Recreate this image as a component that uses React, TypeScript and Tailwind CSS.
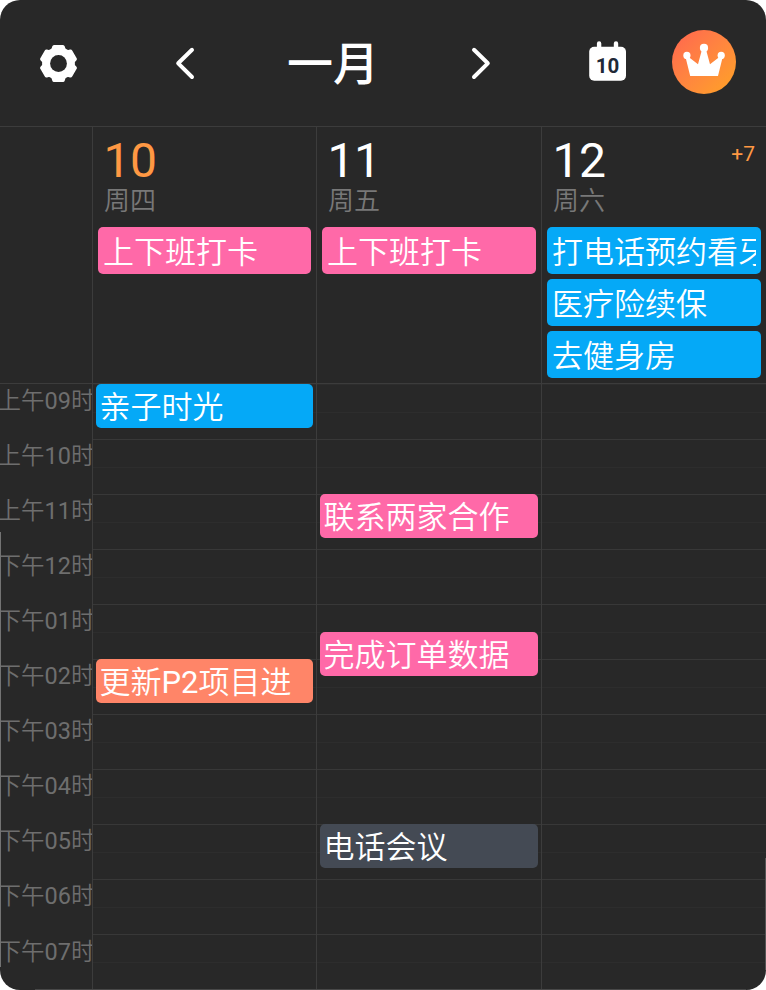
import React from "react";

type Tone = "pink" | "blue" | "orange" | "slate";

const tones: Record<Tone, string> = {
  pink: "bg-[#ff69a8]",
  blue: "bg-[#05a9f7]",
  orange: "bg-[#ff8568]",
  slate: "bg-[#444a54]",
};

interface TimedEvent {
  title: string;
  tone: Tone;
  /** Offset in hours from the first visible hour */
  start: number;
}

interface Day {
  date: string;
  weekday: string;
  today?: boolean;
  more?: string;
  allDay: { title: string; tone: Tone }[];
  timed: TimedEvent[];
}

const HOUR = 55.04;

const days: Day[] = [
  {
    date: "10",
    weekday: "周四",
    today: true,
    allDay: [{ title: "上下班打卡", tone: "pink" }],
    timed: [
      { title: "亲子时光", tone: "blue", start: 0 },
      { title: "更新P2项目进", tone: "orange", start: 5 },
    ],
  },
  {
    date: "11",
    weekday: "周五",
    allDay: [{ title: "上下班打卡", tone: "pink" }],
    timed: [
      { title: "联系两家合作", tone: "pink", start: 2 },
      { title: "完成订单数据", tone: "pink", start: 4.5 },
      { title: "电话会议", tone: "slate", start: 8 },
    ],
  },
  {
    date: "12",
    weekday: "周六",
    more: "+7",
    allDay: [
      { title: "打电话预约看牙", tone: "blue" },
      { title: "医疗险续保", tone: "blue" },
      { title: "去健身房", tone: "blue" },
    ],
    timed: [],
  },
];

const hours = [
  "上午09时", "上午10时", "上午11时", "下午12时", "下午01时", "下午02时",
  "下午03时", "下午04时", "下午05时", "下午06时", "下午07时",
];

const columns = "grid grid-cols-[92px_224px_225px_225px]";

/** Sets Latin letters and digits at regular weight beside the lighter Chinese glyphs. */
function Mixed({ text }: { text: string }) {
  return (
    <span>
      {text.split(/([A-Z0-9]+)/).map((part, i) =>
        i % 2 ? <span key={i} className="font-normal">{part}</span> : part,
      )}
    </span>
  );
}

function GearIcon() {
  return (
    <svg className="h-[38px] w-[38px]" viewBox="-0.5 -0.5 38 38">
      <g fill="#fff">
        <circle cx="19" cy="19" r="16.4" />
        {[0, 60, 120].map((a) => (
          <path
            key={a}
            transform={`rotate(${a} 19 19)`}
            d="M14.5 .6h9q1.3 0 1.8 1.5l1.2 4.2v25.4l-1.2 4.2q-.5 1.5-1.8 1.5h-9q-1.3 0-1.8-1.5l-1.2-4.2V6.3l1.2-4.2q.5-1.5 1.8-1.5z"
          />
        ))}
      </g>
      <circle cx="19" cy="19" r="8.4" fill="#282828" />
    </svg>
  );
}

function Chevron({ flip = false }: { flip?: boolean }) {
  return (
    <svg className={`h-[34px] w-5 ${flip ? "-scale-x-100" : ""}`} viewBox="0 0 20 34" fill="none">
      <path d="M17 3.8 3.2 17.3 17 31" stroke="#fff" strokeWidth="4" strokeLinecap="round" strokeLinejoin="round" />
    </svg>
  );
}

function CalendarIcon() {
  return (
    <svg className="h-10 w-[38px]" viewBox="0 0 38 40">
      <rect x="0.2" y="5.8" width="36.8" height="34" rx="5" fill="#fff" />
      <path d="M10.1 2.4v6M27 2.4v6" stroke="#fff" strokeWidth="4.4" strokeLinecap="round" />
      <text x="18.6" y="31.8" textAnchor="middle" fill="#1f2937" fontSize="20.5" fontWeight="700" fontFamily="Roboto, sans-serif">
        10
      </text>
    </svg>
  );
}

function CrownBadge() {
  return (
    <div className="h-16 w-16 rounded-full bg-linear-to-br from-[#ff644f] to-[#ffa31f]">
      <svg className="h-16 w-16" viewBox="0 0 64 64" fill="#fff">
        <path d="M14.7 25.5 26 34.3l4.6-17.1h2.8L38 34.3l11.3-8.8 1.6.8-4.9 19.7H18.2l-4.9-19.7z" />
        <circle cx="32" cy="17.9" r="4.1" />
        <circle cx="14.9" cy="25.4" r="3.6" />
        <circle cx="49.2" cy="25.4" r="3.6" />
      </svg>
    </div>
  );
}

export default function App() {
  return (
    <div className="h-[990px] w-[766px] bg-white">
      <div className="relative flex h-[990px] flex-col overflow-hidden rounded-[20px] bg-[#282828] font-[Roboto,'Noto_Sans_CJK_SC',sans-serif] text-white">
        <header className="flex h-[126px] shrink-0 items-center">
          <div className="ml-[39px]"><GearIcon /></div>
          <div className="ml-[98px]"><Chevron /></div>
          <h1 className="ml-[92px] w-[94px] pt-px text-[46px] leading-[60px] font-medium whitespace-nowrap">一月</h1>
          <div className="ml-[90px]"><Chevron flip /></div>
          <div className="ml-[98px] pb-1"><CalendarIcon /></div>
          <div className="ml-[45px] pb-0.5"><CrownBadge /></div>
        </header>

        <section className={`${columns} h-[258px] shrink-0 border-y border-[#3c3c3c]`}>
          <div />
          {days.map((day) => (
            <div key={day.date} className="min-w-0 border-l border-[#3c3c3c] px-[5px]">
              <div className="flex h-[60px] items-start justify-between pl-[5.5px]">
                <span className={`pt-[10px] text-[48px] leading-[48px] tracking-[-0.4px] ${day.today ? "text-[#ff9843]" : ""}`}>{day.date}</span>
                {day.more && <span className="pt-[15px] pr-[6px] text-[21px] leading-6 text-[#ff9843]">{day.more}</span>}
              </div>
              <div className="h-10 pt-px pl-[6px] text-[26px] leading-[27px] font-[350] text-[#787878]">{day.weekday}</div>
              <div className="flex flex-col gap-[5px]">
                {day.allDay.map((e) => (
                  <div key={e.title} className={`${tones[e.tone]} h-[47px] rounded-[5px] px-[5px]`}>
                    <div className="h-[47px] overflow-hidden pt-[2px] text-[31px] leading-[47px] font-[350] whitespace-nowrap">{e.title}</div>
                  </div>
                ))}
              </div>
            </div>
          ))}
        </section>

        <section className={`${columns} min-h-0 flex-1 overflow-hidden`}>
          <div className="pt-[0.2px]">
            {hours.map((h) => (
              <div key={h} className="flex h-[55.04px] justify-center overflow-hidden text-[23.5px] leading-[34px] font-[350] whitespace-nowrap text-[#6e6e6e]">
                <Mixed text={h} />
              </div>
            ))}
          </div>
          {days.map((day) => (
            <div key={day.date} className="relative border-l border-[#3c3c3c]">
              {hours.map((h, i) => (
                <div key={h} className={`h-[55.04px] ${i ? "border-t border-[#383838]" : "border-t border-[#2d2d2d]"}`}>
                  <div className="h-[27.6px] border-b border-[#2d2d2d]" />
                </div>
              ))}
              {day.timed.map((e) => (
                <div
                  key={e.title}
                  className={`${tones[e.tone]} absolute right-[3px] left-[3px] h-11 overflow-hidden rounded-[5px] pt-[2px] pl-[3.5px] text-[31px] leading-[44px] font-[350] whitespace-nowrap`}
                  style={{ top: Math.round(e.start * HOUR) }}
                >
                  <Mixed text={e.title} />
                </div>
              ))}
            </div>
          ))}
        </section>

        {/* Faint frame edges */}
        <div className="absolute top-[532px] left-0 h-[435px] w-px bg-[#737373]" />
        <div className="absolute top-[858px] right-0 h-[112px] w-px bg-[#555]" />
        <div className="absolute right-5 bottom-0 left-[35px] h-px bg-[#484848]" />
      </div>
    </div>
  );
}
